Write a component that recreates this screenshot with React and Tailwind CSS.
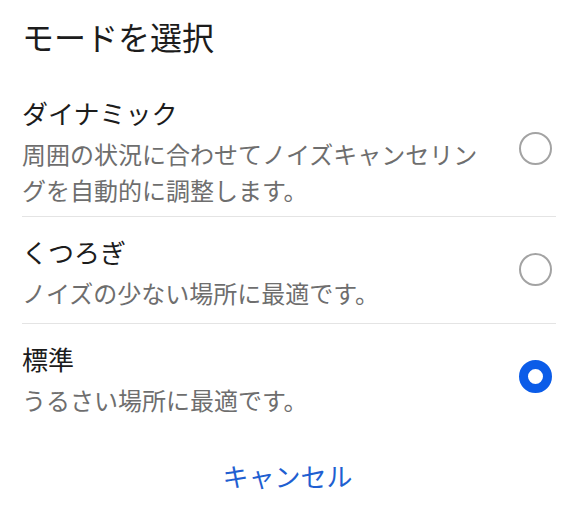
import React, { useState } from 'react';

const MODES = [
    {
        id: 'dynamic',
        label: 'ダイナミック',
        desc: '周囲の状況に合わせてノイズキャンセリングを自動的に調整します。',
    },
    {
        id: 'relax',
        label: 'くつろぎ',
        desc: 'ノイズの少ない場所に最適です。',
    },
    {
        id: 'standard',
        label: '標準',
        desc: 'うるさい場所に最適です。',
    },
];

function Radio({ checked }) {
    return checked ? (
        <span className="block w-[33px] h-[33px] rounded-full border-[9px] border-[#0b5ce8] bg-white shrink-0" />
    ) : (
        <span className="block w-[33px] h-[33px] rounded-full border-2 border-[#a3a3a3] bg-white shrink-0" />
    );
}

export default function App() {
    const [mode, setMode] = useState('standard');

    return (
        <div
            className="w-[573px] h-[512px] bg-white overflow-hidden"
            style={{ fontFamily: '"Noto Sans CJK JP", "Noto Sans", sans-serif' }}
        >
            <h1 className="pl-[22px] pt-[14px] text-[32px] leading-[44px] text-[#1c1c1c] font-normal">
                モードを選択
            </h1>

            <ul className="mt-[37px] pl-[22px] pr-[17px]">
                {MODES.map((m, i) => (
                    <li
                        key={m.id}
                        onClick={() => setMode(m.id)}
                        className={`flex items-center cursor-pointer ${i === 0 ? 'pb-[8px]' : 'pt-[17px] pb-[12px]'} ${i < MODES.length - 1 ? 'border-b border-[#e4e4e4]' : ''}`}
                    >
                        <div className="flex-1 min-w-0 pr-[40px]">
                            <div className="text-[26px] leading-[36px] text-[#1c1c1c]">{m.label}</div>
                            <div className="mt-[5px] text-[24px] leading-[36px] text-[#6e6e6e]">{m.desc}</div>
                        </div>
                        <div className="pr-[4px] pb-[6px]">
                            <Radio checked={mode === m.id} />
                        </div>
                    </li>
                ))}
            </ul>

            <div className="mt-[28px] flex justify-center">
                <button className="text-[26px] leading-[36px] text-[#1f5fd1] pl-[2px]">
                    キャンセル
                </button>
            </div>
        </div>
    );
}
